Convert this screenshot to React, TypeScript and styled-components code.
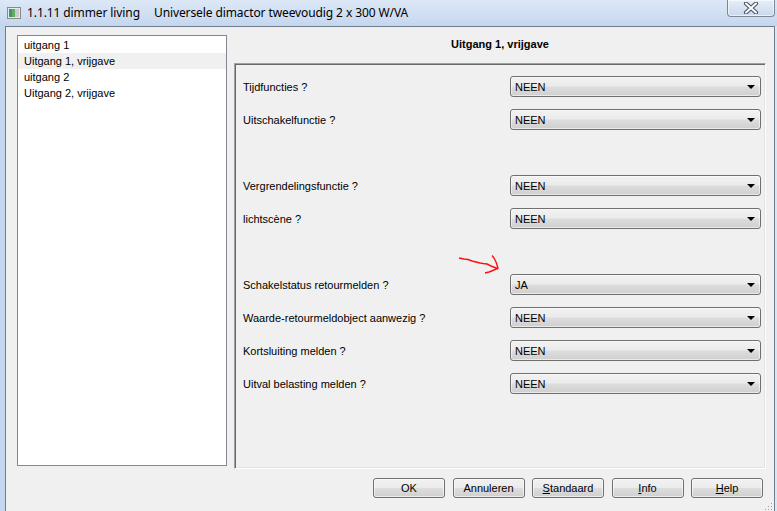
import React from 'react'
import styled, { createGlobalStyle } from 'styled-components'

const GlobalStyle = createGlobalStyle`
  html, body {
    margin: 0;
    padding: 0;
    overflow: hidden;
  }
  body {
    font-family: 'Liberation Sans', Arial, sans-serif;
    font-size: 11px;
    color: #000;
  }
`

type Row = { label: string; value: string } | null

const channels = ['uitgang 1', 'Uitgang 1, vrijgave', 'uitgang 2', 'Uitgang 2, vrijgave']

const rows: Row[] = [
  { label: 'Tijdfuncties ?', value: 'NEEN' },
  { label: 'Uitschakelfunctie ?', value: 'NEEN' },
  null,
  { label: 'Vergrendelingsfunctie ?', value: 'NEEN' },
  { label: 'lichtscène ?', value: 'NEEN' },
  null,
  { label: 'Schakelstatus retourmelden ?', value: 'JA' },
  { label: 'Waarde-retourmeldobject aanwezig ?', value: 'NEEN' },
  { label: 'Kortsluiting melden ?', value: 'NEEN' },
  { label: 'Uitval belasting melden ?', value: 'NEEN' }
]

const buttons: { text: string; key?: string }[] = [
  { text: 'OK' },
  { text: 'Annuleren' },
  { text: 'tandaard', key: 'S' },
  { text: 'nfo', key: 'I' },
  { text: 'elp', key: 'H' }
]

function WindowIcon() {
  return (
    <svg width='14' height='12' viewBox='0 0 14 12'>
      <rect x='0.5' y='0.5' width='13' height='11' fill='#e8e8e8' stroke='#8a8a8a' />
      <rect x='2' y='2' width='3' height='8' fill='#3c8f8a' />
      <rect x='5' y='2' width='3' height='8' fill='#5fae5a' />
      <rect x='8' y='2' width='4' height='8' fill='#c9ccd2' />
    </svg>
  )
}

function CloseGlyph() {
  return (
    <svg width='16' height='12' viewBox='0 0 16 12'>
      <path
        d='M3 1.5 L13 10.5 M13 1.5 L3 10.5'
        stroke='#4a5564'
        strokeWidth='4.2'
        strokeLinecap='round'
      />
      <path
        d='M3 1.5 L13 10.5 M13 1.5 L3 10.5'
        stroke='#fff'
        strokeWidth='2'
        strokeLinecap='round'
      />
    </svg>
  )
}

// hand-drawn red pointer next to the "retourmelden" row
function Arrow() {
  return (
    <svg width='50' height='30' viewBox='0 0 50 30'>
      <path
        d='M1 4 L6 5 L10 5.5 L14 7 L18 8 L22 9 L25 9.5 L29 10 L33 12 L38 14 L40 15'
        stroke='#ff1010'
        strokeWidth='1.4'
        fill='none'
        strokeLinejoin='round'
      />
      <path
        d='M34 1.5 L36 4 L38 8 L40 14 L36 16 L31 18 L27 19'
        stroke='#ff1010'
        strokeWidth='1.4'
        fill='none'
        strokeLinejoin='round'
      />
    </svg>
  )
}

export default function App() {
  return (
    <>
      <GlobalStyle />
      <Window>
        <TitleBar>
          <WindowIcon />
          <Title>
            1.1.11 dimmer living<TitleGap />Universele dimactor tweevoudig 2 x 300 W/VA
          </Title>
          <CloseButton>
            <CloseGlyph />
          </CloseButton>
        </TitleBar>
        <Client>
          <Main>
            <ChannelList>
              {channels.map((c, i) => (
                <ChannelItem key={c} $selected={i === 1}>
                  {c}
                </ChannelItem>
              ))}
            </ChannelList>
            <Settings>
              <Heading>Uitgang 1, vrijgave</Heading>
              <Panel>
                {rows.map((r, i) =>
                  r ? (
                    <ParamRow key={r.label}>
                      <ParamLabel>{r.label}</ParamLabel>
                      <Combo>
                        <span>{r.value}</span>
                        <ComboArrow />
                      </Combo>
                    </ParamRow>
                  ) : (
                    <ParamRow key={'gap' + i} />
                  )
                )}
              </Panel>
            </Settings>
          </Main>
          <ButtonBar>
            {buttons.map((b) => (
              <DialogButton key={b.text}>
                {b.key && <u>{b.key}</u>}
                {b.text}
              </DialogButton>
            ))}
          </ButtonBar>
          <Grip>
            <svg width='10' height='10' viewBox='0 0 10 10'>
              {[
                [8, 2],
                [8, 5],
                [5, 5],
                [8, 8],
                [5, 8],
                [2, 8]
              ].map(([x, y]) => (
                <rect key={x + '-' + y} x={x} y={y} width='1' height='1' fill='#a0a0a0' />
              ))}
            </svg>
          </Grip>
          <Annotation>
            <Arrow />
          </Annotation>
        </Client>
      </Window>
    </>
  )
}

const Window = styled.div`
  width: 777px;
  height: 511px;
  display: flex;
  flex-direction: column;
  background: linear-gradient(to right, #c4d7ee 0%, #cfdef1 40%, #d9e6f5 100%);
`

const TitleBar = styled.div`
  height: 26px;
  display: flex;
  align-items: flex-start;
  padding-left: 7px;
  background: linear-gradient(to bottom, #dce8f6 0%, #cfdef2 60%, #c3d6ee 100%);

  svg {
    margin-top: 7px;
  }
`

const Title = styled.div`
  font-family: 'Segoe UI', 'Noto Sans', 'Open Sans', sans-serif;
  font-size: 12px;
  margin-left: 6px;
  margin-top: 4px;
  color: #000;
  white-space: nowrap;
  letter-spacing: -0.1px;
`

const TitleGap = styled.span`
  display: inline-block;
  width: 14px;
`

const CloseButton = styled.div`
  margin-left: auto;
  margin-right: 2px;
  width: 46px;
  height: 16px;
  border: 1px solid #7d8897;
  border-top: none;
  border-radius: 0 0 4px 4px;
  background: linear-gradient(to bottom, #e6eef9 0%, #d7e3f3 50%, #c9d8ee 100%);
  box-shadow: inset 0 0 0 1px rgba(255, 255, 255, 0.6);
  display: flex;
  align-items: center;
  justify-content: center;

  svg {
    margin-top: 0;
  }
`

const Client = styled.div`
  position: relative;
  flex: 1;
  margin: 0 2px 0 5px;
  background: #f0f0f0;
  border: 1px solid #6f7d8d;
  border-bottom: none;
  padding: 8px 8px 0 11px;
  display: flex;
  flex-direction: column;
`

const Main = styled.div`
  display: flex;
  gap: 7px;
`

const ChannelList = styled.div`
  width: 211px;
  height: 428px;
  background: #fff;
  border: 1px solid #828790;
  padding-top: 1px;
`

const ChannelItem = styled.div<{ $selected?: boolean }>`
  height: 16px;
  line-height: 16px;
  padding-left: 6px;
  background: ${({ $selected }) => ($selected ? '#f0f0f0' : 'transparent')};
`

const Settings = styled.div`
  flex: 1;
  display: flex;
  flex-direction: column;
`

const Heading = styled.div`
  height: 28px;
  line-height: 18px;
  text-align: center;
  font-weight: bold;
`

const Panel = styled.div`
  height: 398px;
  border: 1px solid;
  border-color: #a0a0a0 #ffffff #ffffff #a0a0a0;
  box-shadow: inset 1px 1px 0 #696969, inset -1px -1px 0 #e3e3e3;
  padding: 6px 4px 0 8px;
`

const ParamRow = styled.div`
  height: 33px;
  display: flex;
  align-items: center;
`

const ParamLabel = styled.div`
  width: 267px;
  white-space: nowrap;
`

const Combo = styled.div`
  box-sizing: content-box;
  width: 245px;
  height: 19px;
  border: 1px solid #707070;
  border-radius: 3px;
  background: linear-gradient(to bottom, #f2f2f2 0%, #ebebeb 48%, #dddddd 52%, #cfcfcf 100%);
  box-shadow: inset 0 0 0 1px rgba(255, 255, 255, 0.55);
  display: flex;
  align-items: center;
  padding-left: 4px;
`

const ComboArrow = styled.span`
  margin-left: auto;
  margin-right: 5px;
  width: 0;
  height: 0;
  border-left: 4px solid transparent;
  border-right: 4px solid transparent;
  border-top: 4px solid #000;
`

const ButtonBar = styled.div`
  display: flex;
  justify-content: flex-end;
  gap: 7.5px;
  margin-top: 9px;
  padding-right: 3px;
`

const DialogButton = styled.div`
  width: 70px;
  height: 18px;
  border: 1px solid #707070;
  border-radius: 3px;
  background: linear-gradient(to bottom, #f2f2f2 0%, #ebebeb 48%, #dddddd 52%, #cfcfcf 100%);
  box-shadow: inset 0 0 0 1px rgba(255, 255, 255, 0.6);
  display: flex;
  align-items: center;
  justify-content: center;
  font-size: 11px;
`

const Grip = styled.div`
  position: absolute;
  right: 1px;
  bottom: 0;
  line-height: 0;
`

const Annotation = styled.div`
  position: absolute;
  left: 452px;
  top: 227px;
  line-height: 0;
`
